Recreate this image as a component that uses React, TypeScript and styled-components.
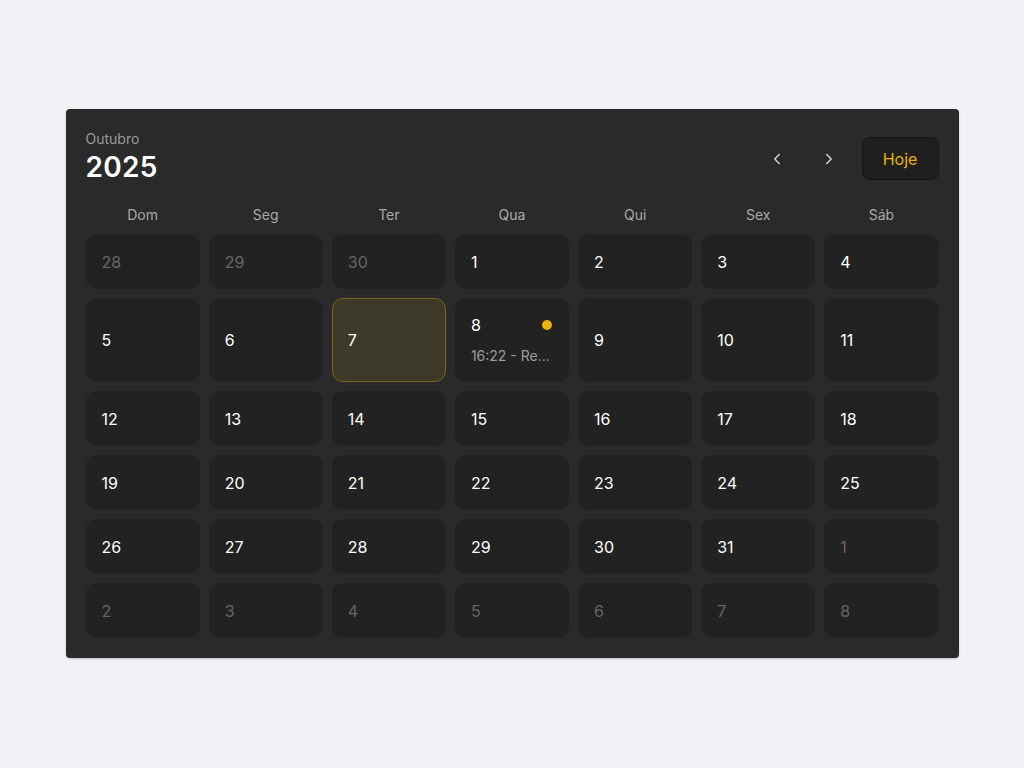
import React from "react";
import styled, { createGlobalStyle } from "styled-components";

const Accent = "#eab308";

const GlobalStyle = createGlobalStyle`
  html, body {
    margin: 0;
    padding: 0;
    background: #f1f2f6;
    font-family: Inter, "Noto Sans", sans-serif;
  }
`;

const Page = styled.div`
  display: flex;
  justify-content: center;
  align-items: flex-start;
  padding-top: 109px;
  min-height: 768px;
  box-sizing: border-box;
`;

const Card = styled.div`
  width: 893px;
  box-sizing: border-box;
  background: #2a2a2a;
  border-radius: 4px;
  padding: 20px 20px 20px;
  box-shadow: 0 1px 2px rgba(0, 0, 0, 0.2);
`;

const Header = styled.div`
  display: flex;
  justify-content: space-between;
  align-items: flex-start;
  padding-top: 1px;
`;

const TitleBlock = styled.div`
  display: flex;
  flex-direction: column;
`;

const Month = styled.span`
  color: #9a9a9a;
  font-size: 14px;
  line-height: 18px;
`;

const Year = styled.span`
  color: #ffffff;
  font-size: 28px;
  font-weight: 600;
  line-height: 38px;
  letter-spacing: 0.3px;
`;

const Controls = styled.div`
  display: flex;
  align-items: center;
  gap: 16px;
  margin-top: 7px;
`;

const NavButton = styled.button`
  width: 36px;
  height: 36px;
  display: flex;
  align-items: center;
  justify-content: center;
  background: transparent;
  border: none;
  color: #d0d0d0;
  padding: 0;
  cursor: pointer;
`;

const TodayButton = styled.button`
  width: 77px;
  height: 43px;
  margin-left: -1px;
  background: #1f1f1f;
  border: 1px solid #141414;
  border-radius: 8px;
  color: ${Accent};
  font-family: Inter, "Noto Sans", sans-serif;
  font-size: 16px;
  font-weight: 400;
  cursor: pointer;
`;

const Weekdays = styled.div`
  display: grid;
  grid-template-columns: repeat(7, 1fr);
  column-gap: 9px;
  margin-top: 19px;
  margin-bottom: 9px;
`;

const Weekday = styled.div`
  text-align: center;
  color: #a8a8a8;
  font-size: 14px;
  line-height: 20px;
`;

const Grid = styled.div`
  display: grid;
  grid-template-columns: repeat(7, 1fr);
  gap: 9px;
`;

const Cell = styled.div<{ $today?: boolean }>`
  min-height: 55px;
  box-sizing: border-box;
  border-radius: 11px;
  padding: 16px 15px;
  display: flex;
  flex-direction: column;
  justify-content: center;
  background: ${(p) => (p.$today ? "#3d3a2a" : "#222222")};
  border: 1px solid ${(p) => (p.$today ? "#7d6518" : "transparent")};
  min-width: 0;
`;

const DayRow = styled.div`
  display: flex;
  align-items: center;
  justify-content: space-between;
  padding-right: 1px;
`;

const DayNumber = styled.span<{ $muted?: boolean }>`
  font-size: 16px;
  line-height: 20px;
  color: ${(p) => (p.$muted ? "#666666" : "#ffffff")};
`;

const Dot = styled.span`
  width: 10px;
  height: 10px;
  border-radius: 50%;
  background: ${Accent};
`;

const EventText = styled.div`
  margin-top: 11px;
  font-size: 14px;
  line-height: 19px;
  color: #9c9c9c;
  white-space: nowrap;
  overflow: hidden;
  text-overflow: ellipsis;
`;

type Day = { n: number; muted?: boolean; today?: boolean; event?: string };

const weekdays = ["Dom", "Seg", "Ter", "Qua", "Qui", "Sex", "Sáb"];

const buildDays = (): Day[] => {
  const days: Day[] = [28, 29, 30].map((n) => ({ n, muted: true }));
  for (let i = 1; i <= 31; i++) {
    days.push({
      n: i,
      today: i === 7,
      event: i === 8 ? "16:22 - Re..." : undefined,
    });
  }
  for (let i = 1; i <= 8; i++) days.push({ n: i, muted: true });
  return days;
};

const Chevron = ({ dir }: { dir: "left" | "right" }) => (
  <svg width="18" height="18" viewBox="0 0 24 24" fill="none" stroke="currentColor" strokeWidth="2" strokeLinecap="round" strokeLinejoin="round">
    {dir === "left" ? <path d="M15 18l-6-6 6-6" /> : <path d="M9 18l6-6-6-6" />}
  </svg>
);

const App = () => {
  const days = buildDays();
  return (
    <>
      <GlobalStyle />
      <Page>
        <Card>
          <Header>
            <TitleBlock>
              <Month>Outubro</Month>
              <Year>2025</Year>
            </TitleBlock>
            <Controls>
              <NavButton aria-label="Anterior">
                <Chevron dir="left" />
              </NavButton>
              <NavButton aria-label="Próximo">
                <Chevron dir="right" />
              </NavButton>
              <TodayButton>Hoje</TodayButton>
            </Controls>
          </Header>
          <Weekdays>
            {weekdays.map((w) => (
              <Weekday key={w}>{w}</Weekday>
            ))}
          </Weekdays>
          <Grid>
            {days.map((d, i) => (
              <Cell key={i} $today={d.today}>
                <DayRow>
                  <DayNumber $muted={d.muted}>{d.n}</DayNumber>
                  {d.event && <Dot />}
                </DayRow>
                {d.event && <EventText>{d.event}</EventText>}
              </Cell>
            ))}
          </Grid>
        </Card>
      </Page>
    </>
  );
};

export default App;
